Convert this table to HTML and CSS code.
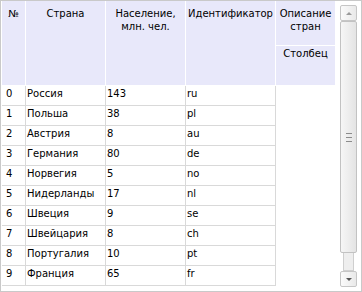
FILE: index.html
```html
<!DOCTYPE html>
<html lang="ru">
<head>
<meta charset="utf-8">
<title>Grid</title>
<link rel="stylesheet" href="styles.css">
</head>
<body>
<div class="frame">
  <div class="viewport">
    <div class="header">
      <div class="hcell c0">№</div>
      <div class="hcell c1">Страна</div>
      <div class="hcell c2">Население,<br>млн. чел.</div>
      <div class="hcell c3">Идентификатор</div>
      <div class="hgroup c4">
        <div class="hg-title">Описание<br>стран</div>
        <div class="hg-sub">Столбец</div>
      </div>
    </div>
    <div class="rows">
      <div class="row"><div class="cell c0 num">0</div><div class="cell c1">Россия</div><div class="cell c2">143</div><div class="cell c3">ru</div></div>
      <div class="row"><div class="cell c0 num">1</div><div class="cell c1">Польша</div><div class="cell c2">38</div><div class="cell c3">pl</div></div>
      <div class="row"><div class="cell c0 num">2</div><div class="cell c1">Австрия</div><div class="cell c2">8</div><div class="cell c3">au</div></div>
      <div class="row"><div class="cell c0 num">3</div><div class="cell c1">Германия</div><div class="cell c2">80</div><div class="cell c3">de</div></div>
      <div class="row"><div class="cell c0 num">4</div><div class="cell c1">Норвегия</div><div class="cell c2">5</div><div class="cell c3">no</div></div>
      <div class="row"><div class="cell c0 num">5</div><div class="cell c1">Нидерланды</div><div class="cell c2">17</div><div class="cell c3">nl</div></div>
      <div class="row"><div class="cell c0 num">6</div><div class="cell c1">Швеция</div><div class="cell c2">9</div><div class="cell c3">se</div></div>
      <div class="row"><div class="cell c0 num">7</div><div class="cell c1">Швейцария</div><div class="cell c2">8</div><div class="cell c3">ch</div></div>
      <div class="row"><div class="cell c0 num">8</div><div class="cell c1">Португалия</div><div class="cell c2">10</div><div class="cell c3">pt</div></div>
      <div class="row"><div class="cell c0 num">9</div><div class="cell c1">Франция</div><div class="cell c2">65</div><div class="cell c3">fr</div></div>
    </div>
  </div>
  <div class="scrollbar">
    <div class="sb-btn sb-up"><span class="arrow-up"></span></div>
    <div class="sb-thumb"><span class="grip"></span><span class="grip"></span><span class="grip"></span></div>
    <div class="sb-track"></div>
    <div class="sb-btn sb-down"><span class="arrow-down"></span></div>
  </div>
</div>
</body>
</html>
```
FILE: styles.css
```css
html, body {
  margin: 0;
  padding: 0;
  background: #ffffff;
}
body {
  font-family: "DejaVu Sans", "Liberation Sans", sans-serif;
  font-size: 10px;
  color: #000000;
}
.frame {
  width: 362px;
  height: 292px;
  box-sizing: border-box;
  border: 1px solid #c9c9c9;
  display: flex;
  background: #ffffff;
}
.viewport {
  width: 339px;
  padding-left: 1px;
  box-sizing: border-box;
  display: flex;
  flex-direction: column;
}
.header {
  display: flex;
  height: 85px;
  border-bottom: 1px solid #ffffff;
  box-sizing: border-box;
}
.hcell {
  background: #e8e8fa;
  border-right: 1px solid #ffffff;
  box-sizing: border-box;
  text-align: center;
  line-height: 13px;
  padding-top: 6px;
  white-space: nowrap;
}
.c0 { width: 24px; }
.c1 { width: 80px; }
.c2 { width: 80px; }
.c3 { width: 90px; }
.c4 { width: 60px; }
.hgroup {
  display: flex;
  flex-direction: column;
  box-sizing: border-box;
  width: 59px;
}
.hg-title {
  height: 45px;
  box-sizing: border-box;
  background: #e8e8fa;
  border-bottom: 1px solid #ffffff;
  text-align: center;
  line-height: 13px;
  padding-top: 6px;
}
.hg-sub {
  flex: 1;
  background: #e8e8fa;
  text-align: center;
  line-height: 13px;
  padding-top: 1px;
}
.rows {
  display: flex;
  flex-direction: column;
}
.row {
  display: flex;
  height: 20px;
}
.cell {
  box-sizing: border-box;
  height: 20px;
  border-right: 1px solid #d9d9d9;
  border-bottom: 1px solid #d9d9d9;
  padding-left: 1px;
  line-height: 15px;
  padding-top: 0;
  white-space: nowrap;
}
.cell.num {
  padding-left: 4px;
}
.scrollbar {
  width: 17px;
  margin-top: 4px;
  height: 282px;
  display: flex;
  flex-direction: column;
  align-items: center;
}
.sb-btn {
  width: 17px;
  height: 16px;
  box-sizing: border-box;
  border: 1px solid #c6c6c6;
  border-radius: 2px;
  background: linear-gradient(to right, #fbfbfb, #e9e9e9);
  display: flex;
  align-items: center;
  justify-content: center;
}
.arrow-up {
  width: 0;
  height: 0;
  border-left: 3px solid transparent;
  border-right: 3px solid transparent;
  border-bottom: 3px solid #9a9a9a;
}
.arrow-down {
  width: 0;
  height: 0;
  border-left: 3px solid transparent;
  border-right: 3px solid transparent;
  border-top: 3px solid #555555;
}
.sb-thumb {
  width: 17px;
  height: 232px;
  box-sizing: border-box;
  border: 1px solid #c2c2c2;
  border-radius: 2px;
  background: linear-gradient(to right, #f6f6f6, #e4e4e4);
  display: flex;
  flex-direction: column;
  align-items: center;
  justify-content: center;
  gap: 3px;
}
.grip {
  width: 6px;
  height: 1px;
  background: #8c8c8c;
}
.sb-track {
  width: 11px;
  height: 18px;
  box-sizing: border-box;
  border: 1px solid #cfcfcf;
  border-top: none;
  background: #eeeeee;
}
```
